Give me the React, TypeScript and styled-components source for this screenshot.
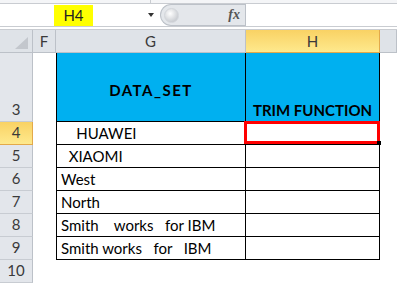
import { FC, Fragment } from "react";
import styled, { createGlobalStyle, css } from "styled-components";

const GlobalStyle = createGlobalStyle`
  html, body {
    margin: 0;
    padding: 0;
    background: #fff;
  }
  body {
    font-family: "Lato", "Liberation Sans", sans-serif;
  }
`;

const Page = styled("div")`
  width: 397px;
  height: 284px;
  overflow: hidden;
  background: #fff;
`;

/* formula bar */
const TopStrip = styled("div")`
  display: flex;
  height: 3px;
  background: #f4f5f7;
  border-bottom: 1px solid #c9ccd1;
`;
const TopTick = styled("div")`
  width: 150px;
  border-right: 1px solid #c9ccd1;
`;
const BarRow = styled("div")`
  display: flex;
  height: 22px;
  background: #fff;
`;
const NameBox = styled("div")`
  width: 160px;
  display: flex;
  align-items: center;
`;
const NameText = styled("span")`
  margin-left: 54px;
  width: 39px;
  height: 21px;
  background: #ffff00;
  display: flex;
  align-items: center;
  justify-content: center;
  font-size: 15px;
  color: #222;
`;
const DropArrow = styled("span")`
  margin-left: auto;
  margin-right: 6px;
  border-left: 3.5px solid transparent;
  border-right: 3.5px solid transparent;
  border-top: 4px solid #333;
`;
const FxPanel = styled("div")`
  width: 85px;
  box-sizing: border-box;
  background: #e4e7eb;
  border: 1px solid #bcc1c8;
  border-right: none;
  border-radius: 11px 0 0 11px;
  display: flex;
  align-items: center;
  padding: 0 5px 0 3px;
`;
const Knob = styled("span")`
  width: 13px;
  height: 13px;
  border-radius: 50%;
  background: radial-gradient(circle at 40% 35%, #ffffff, #c9ccd1 75%);
  border: 1px solid #d3d6db;
`;
const FxLabel = styled("span")`
  margin-left: auto;
  font-family: "Liberation Serif", serif;
  font-style: italic;
  font-weight: bold;
  font-size: 14px;
  color: #555;
`;
const FormulaInput = styled("div")`
  flex: 1;
  border-left: 1px solid #bcc1c8;
  background: #fff;
`;
const Separator = styled("div")`
  height: 2px;
  border-top: 1px solid #c9ccd1;
  border-bottom: 1px solid #c9ccd1;
  background: #fff;
`;

/* sheet */
const Sheet = styled("div")`
  display: grid;
  grid-template-columns: 33px 23px 190px 134px 17px;
  grid-template-rows: 23px 69px repeat(7, 23px);
`;

const activeHead = css`
  background: linear-gradient(#f9d264, #fee98d);
  border-color: #e3a94a;
`;

const Corner = styled("div")`
  position: relative;
  box-sizing: border-box;
  background: #dfe3e8;
  border-right: 1px solid #bcc1c8;
  border-bottom: 1px solid #bcc1c8;
  svg {
    position: absolute;
    right: 4px;
    bottom: 3px;
  }
`;

const ColHead = styled("div")<{ $active?: boolean }>`
  box-sizing: border-box;
  display: flex;
  align-items: center;
  justify-content: center;
  background: #dfe3e8;
  border-right: 1px solid #bcc1c8;
  border-bottom: 1px solid #bcc1c8;
  font-size: 15px;
  color: #3a3a3a;
  ${({ $active }) => $active && activeHead}
`;

const RowHead = styled("div")<{ $active?: boolean }>`
  box-sizing: border-box;
  display: flex;
  align-items: flex-end;
  justify-content: center;
  padding-bottom: 3px;
  background: #e3e6eb;
  border-right: 1px solid #bcc1c8;
  border-bottom: 1px solid #c8ccd2;
  font-size: 15px;
  color: #3a3a3a;
  ${({ $active }) => $active && activeHead}
`;

const Blank = styled("div")`
  background: #fff;
`;

const Cell = styled("div")<{ $first?: boolean; $head?: boolean; $center?: boolean; $selected?: boolean }>`
  position: relative;
  box-sizing: border-box;
  display: flex;
  align-items: flex-end;
  padding: 0 0 2px 4px;
  border-right: 1px solid #000;
  border-bottom: 1px solid #000;
  border-left: ${({ $first }) => ($first ? "1px solid #000" : "none")};
  background: ${({ $head }) => ($head ? "#00b0f0" : "#fff")};
  font-size: 15px;
  font-weight: ${({ $head }) => ($head ? "bold" : "normal")};
  color: #000;
  white-space: pre;
  ${({ $head }) =>
    $head &&
    css`
      justify-content: center;
      padding-left: 0;
    `}
  ${({ $center }) =>
    $center &&
    css`
      align-items: center;
      padding: 5px 0 0;
      letter-spacing: 1.5px;
    `}
  ${({ $selected }) =>
    $selected &&
    css`
      &::after {
        content: "";
        position: absolute;
        left: -2px;
        top: -1px;
        right: -1px;
        bottom: 0;
        border: 3px solid #ff0000;
        z-index: 2;
      }
      &::before {
        content: "";
        position: absolute;
        right: -2px;
        bottom: -1px;
        width: 4px;
        height: 4px;
        background: #000;
        z-index: 3;
      }
    `}
`;

const rows: { n: number; text: string }[] = [
  { n: 4, text: "    HUAWEI" },
  { n: 5, text: "  XIAOMI" },
  { n: 6, text: "West" },
  { n: 7, text: "North" },
  { n: 8, text: "Smith    works   for IBM" },
  { n: 9, text: "Smith works   for   IBM" },
];

const CornerMark: FC = () => (
  <svg width="13" height="12" viewBox="0 0 13 12">
    <polygon points="13,0 13,12 0,12" fill="#c3c7cd" />
  </svg>
);

const App: FC = () => {
  return (
    <Page>
      <GlobalStyle />
      <TopStrip>
        <TopTick />
      </TopStrip>
      <BarRow>
        <NameBox>
          <NameText>H4</NameText>
          <DropArrow />
        </NameBox>
        <FxPanel>
          <Knob />
          <FxLabel>fx</FxLabel>
        </FxPanel>
        <FormulaInput />
      </BarRow>
      <Separator />
      <Sheet>
        <Corner>
          <CornerMark />
        </Corner>
        <ColHead>F</ColHead>
        <ColHead>G</ColHead>
        <ColHead $active>H</ColHead>
        <ColHead />

        <RowHead>3</RowHead>
        <Blank />
        <Cell $first $head $center>DATA_SET</Cell>
        <Cell $head>TRIM FUNCTION</Cell>
        <Blank />

        {rows.map((r) => (
          <Fragment key={r.n}>
            <RowHead $active={r.n === 4}>{r.n}</RowHead>
            <Blank />
            <Cell $first>{r.text}</Cell>
            <Cell $selected={r.n === 4} />
            <Blank />
          </Fragment>
        ))}

        <RowHead>10</RowHead>
      </Sheet>
    </Page>
  );
};

export default App;
